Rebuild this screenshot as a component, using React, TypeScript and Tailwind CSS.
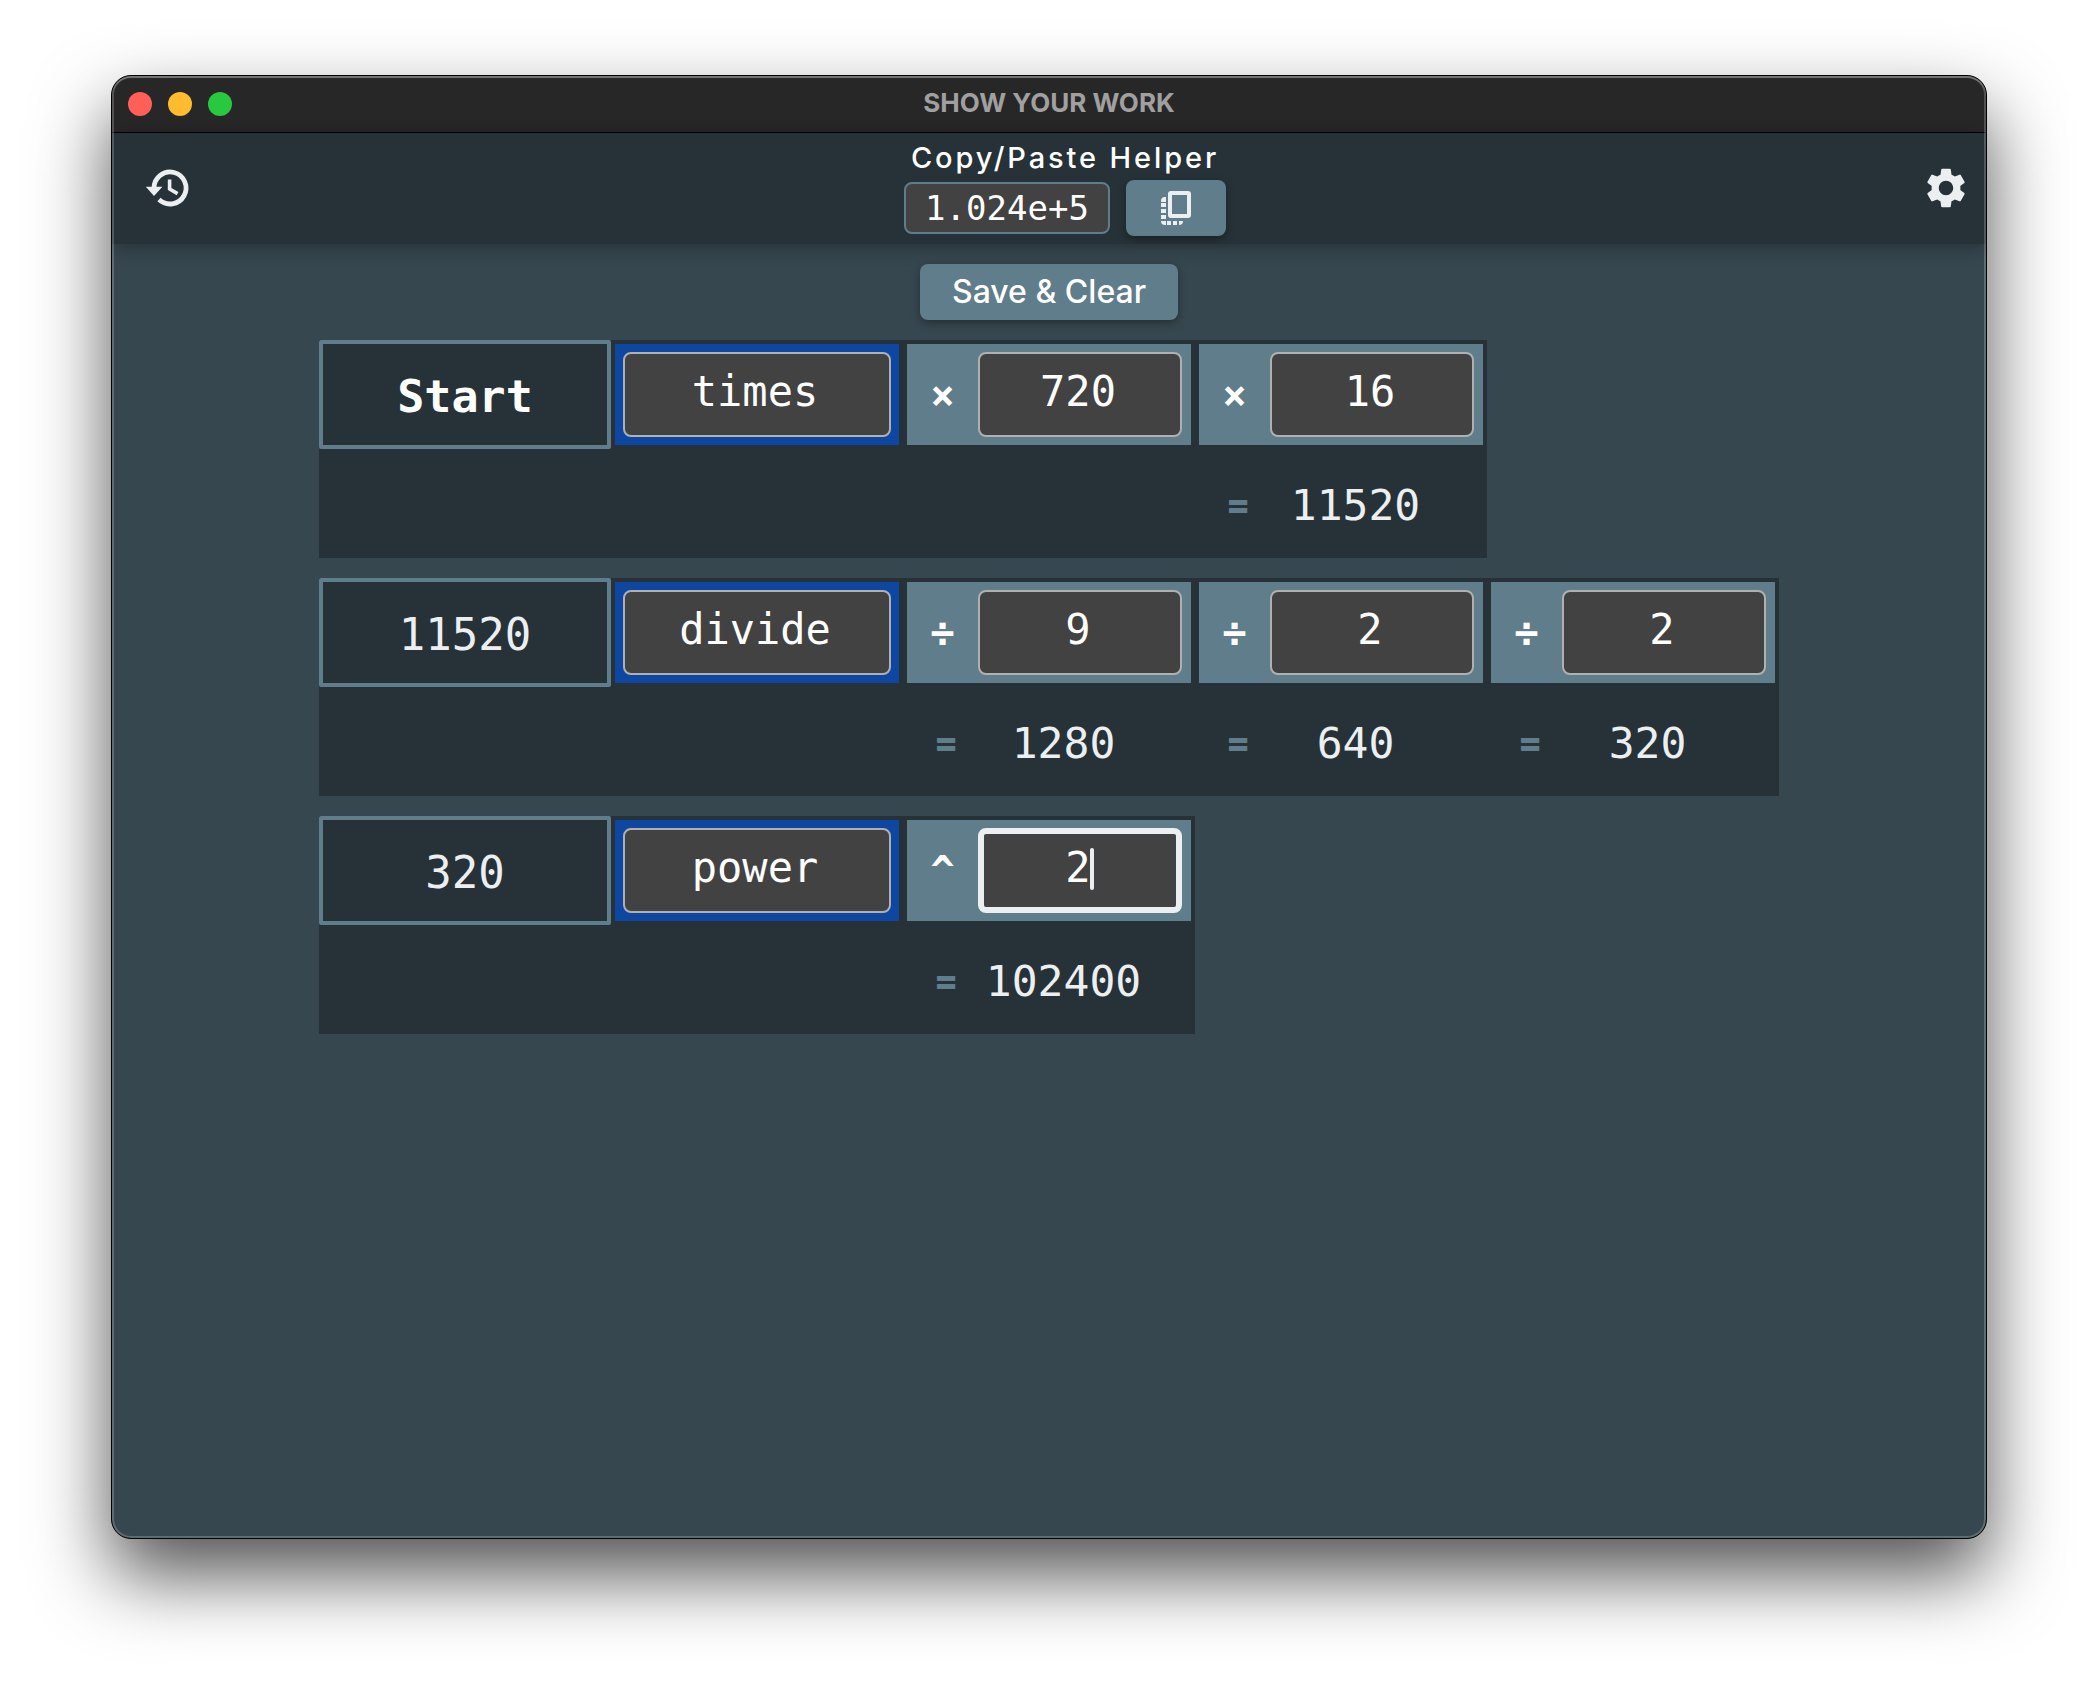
import { useState } from "react";
import { MdSettings } from "react-icons/md";

type Operation = "plus" | "minus" | "times" | "divide" | "power";

type Operand = { value: string; result?: string; active?: boolean };

type Line = { start: string; heading?: boolean; operation: Operation; operands: Operand[] };

const SYMBOLS: Record<Operation, string> = {
  plus: "+",
  minus: "-",
  times: "×",
  divide: "÷",
  power: "^",
};

const LINES: Line[] = [
  {
    start: "Start",
    heading: true,
    operation: "times",
    operands: [{ value: "720" }, { value: "16", result: "11520" }],
  },
  {
    start: "11520",
    operation: "divide",
    operands: [
      { value: "9", result: "1280" },
      { value: "2", result: "640" },
      { value: "2", result: "320" },
    ],
  },
  {
    start: "320",
    operation: "power",
    operands: [{ value: "2", result: "102400", active: true }],
  },
];

function HistoryIcon() {
  return (
    <svg className="size-12" viewBox="0 0 24 24" aria-hidden="true" fill="none" stroke="currentColor">
      <path d="M5 12A8 8 0 1 1 7.5 17.8" strokeWidth="2.4" />
      <path d="M12.8 7.7v4.8l4 2.3" strokeWidth="1.8" />
      <path d="M.9 11.4h8.3L5 16z" fill="currentColor" stroke="none" />
    </svg>
  );
}

function CopyIcon() {
  return (
    <svg width="30" height="34" viewBox="0 0 30 34" aria-hidden="true" fill="#eceff1">
      <rect x="9" y="2" width="19" height="23" rx="1" fill="none" stroke="#eceff1" strokeWidth="4" strokeLinejoin="round" />
      <path d="M5 6v5H0V10a4 4 0 0 1 4-4z" />
      <rect x="0" y="12" width="5" height="4" />
      <rect x="0" y="18" width="5" height="4" />
      <rect x="0" y="24" width="5" height="4" />
      <path d="M0 30h5v4H4a4 4 0 0 1-4-4z" />
      <rect x="6" y="30" width="4" height="4" />
      <rect x="12" y="30" width="4" height="4" />
      <path d="M18 30h4a4 4 0 0 1-4 4z" />
    </svg>
  );
}

function TitleBar() {
  return (
    <div className="flex h-[57px] items-center border-b border-black bg-[#272727] px-4">
      <div className="flex flex-1 gap-4">
        <button type="button" aria-label="Close" className="size-6 rounded-full bg-[#ff5f57]" />
        <button type="button" aria-label="Minimize" className="size-6 rounded-full bg-[#febc2e]" />
        <button type="button" aria-label="Zoom" className="size-6 rounded-full bg-[#28c840]" />
      </div>
      <h1 className="pb-0.5 text-[26px] leading-8 font-bold text-[#a0a0a0]">SHOW YOUR WORK</h1>
      <div className="flex-1" />
    </div>
  );
}

function Header() {
  return (
    <header className="relative flex h-[111px] items-center justify-between bg-[#263238] px-4 pb-px text-[#eceff1] shadow-[0_4px_16px_rgba(0,0,0,0.3)]">
      <button type="button" aria-label="History" className="px-4">
        <HistoryIcon />
      </button>
      <div className="flex flex-col items-center gap-1">
        <label htmlFor="helper" className="text-[29px] leading-9 font-medium tracking-widest text-white">
          Copy/Paste Helper
        </label>
        <div className="flex items-center gap-4">
          <input
            id="helper"
            readOnly
            value="1.024e+5"
            className="h-[52px] w-[206px] rounded-lg border-2 border-[#607d8b] bg-[#424242] text-center font-['DejaVu_Sans_Mono',monospace] text-[34px] text-white"
          />
          <button
            type="button"
            aria-label="Copy"
            className="flex h-14 w-[100px] items-center justify-center rounded-lg bg-[#607d8b] shadow-[0_3px_8px_rgba(0,0,0,0.35)]"
          >
            <CopyIcon />
          </button>
        </div>
      </div>
      <button type="button" aria-label="Settings">
        <MdSettings className="size-12" />
      </button>
    </header>
  );
}

function OperandCell({ symbol, operand }: { symbol: string; operand: Operand }) {
  const [value, setValue] = useState(operand.value);
  return (
    <div className="w-[292px]">
      <div className="m-1 flex h-[101px] items-center bg-[#607d8b] pr-[9px]">
        <span className="flex-1 text-center text-[40px] font-bold text-white">{symbol}</span>
        <div className="relative">
          <input
            aria-label="Operand"
            value={value}
            onChange={(e) => setValue(e.target.value)}
            className={
              operand.active
                ? "block h-[85px] w-[204px] rounded-lg border-6 border-[#eceff1] bg-[#424242] pr-1 pb-1.5 text-center text-[42px] text-white caret-transparent outline-none"
                : "block h-[85px] w-[204px] rounded-lg border-2 border-[#b0b0b0] bg-[#424242] pr-1 pb-1.5 text-center text-[42px] text-white outline-none"
            }
          />
          {operand.active && <span className="absolute top-5 left-1/2 ml-2.5 h-[42px] w-1 rounded-full bg-[#eceff1]" />}
        </div>
      </div>
      {operand.result && (
        <div className="flex h-[109px] items-center px-3 pt-1 text-[#eceff1]">
          <span className="w-[62px] pb-1 text-center font-[Inter,sans-serif] text-4xl font-extrabold text-[#607d8b]">=</span>
          <output className="w-[173px] text-center text-[43px]">{operand.result}</output>
        </div>
      )}
    </div>
  );
}

function WorkLine({ line }: { line: Line }) {
  const [operation, setOperation] = useState<Operation>(line.operation);
  return (
    <section className="flex min-h-[218px] items-start bg-[#263238] font-['DejaVu_Sans_Mono',monospace]">
      <div
        className={
          line.heading
            ? "flex h-[109px] w-[292px] items-center justify-center rounded-xs border-4 border-[#607d8b] pt-1 text-[45px] font-bold text-white"
            : "flex h-[109px] w-[292px] items-center justify-center rounded-xs border-4 border-[#607d8b] pt-1 text-[44px] text-[#eceff1]"
        }
      >
        {line.start}
      </div>
      <div className="m-1 w-[284px] bg-[#0d47a1] p-2">
        <select
          aria-label="Operation"
          value={operation}
          onChange={(e) => setOperation(e.target.value as Operation)}
          className="block h-[85px] w-full appearance-none rounded-lg border-2 border-[#b0b0b0] bg-[#424242] pr-1 pb-1.5 text-center text-[42px] text-white [text-align-last:center]"
        >
          {Object.keys(SYMBOLS).map((name) => (
            <option key={name} value={name}>
              {name}
            </option>
          ))}
        </select>
      </div>
      {line.operands.map((operand, i) => (
        <OperandCell key={i} symbol={SYMBOLS[operation]} operand={operand} />
      ))}
    </section>
  );
}

export default function App() {
  return (
    <div className="flex min-h-screen flex-col bg-white px-[111px] pt-[75px] pb-[147px] font-[Inter,sans-serif]">
      <div className="relative flex flex-1 flex-col overflow-hidden rounded-[20px] border border-black bg-[#37474f] shadow-[0_36px_76px_rgba(0,0,0,0.68)]">
        <TitleBar />
        <Header />
        <main className="flex flex-1 flex-col items-center gap-5 py-5">
          <button
            type="button"
            className="h-14 rounded-lg bg-[#607d8b] px-8 text-[32px] leading-10 font-medium text-white shadow-[0_3px_8px_rgba(0,0,0,0.35)]"
          >
            Save &amp; Clear
          </button>
          <div className="flex flex-col items-start gap-5">
            {LINES.map((line) => (
              <WorkLine key={line.start} line={line} />
            ))}
          </div>
        </main>
        <div className="pointer-events-none absolute inset-0 rounded-[19px] shadow-[inset_0_0_0_2px_rgba(255,255,255,0.2),inset_0_2px_0_rgba(255,255,255,0.2)]" />
      </div>
    </div>
  );
}
